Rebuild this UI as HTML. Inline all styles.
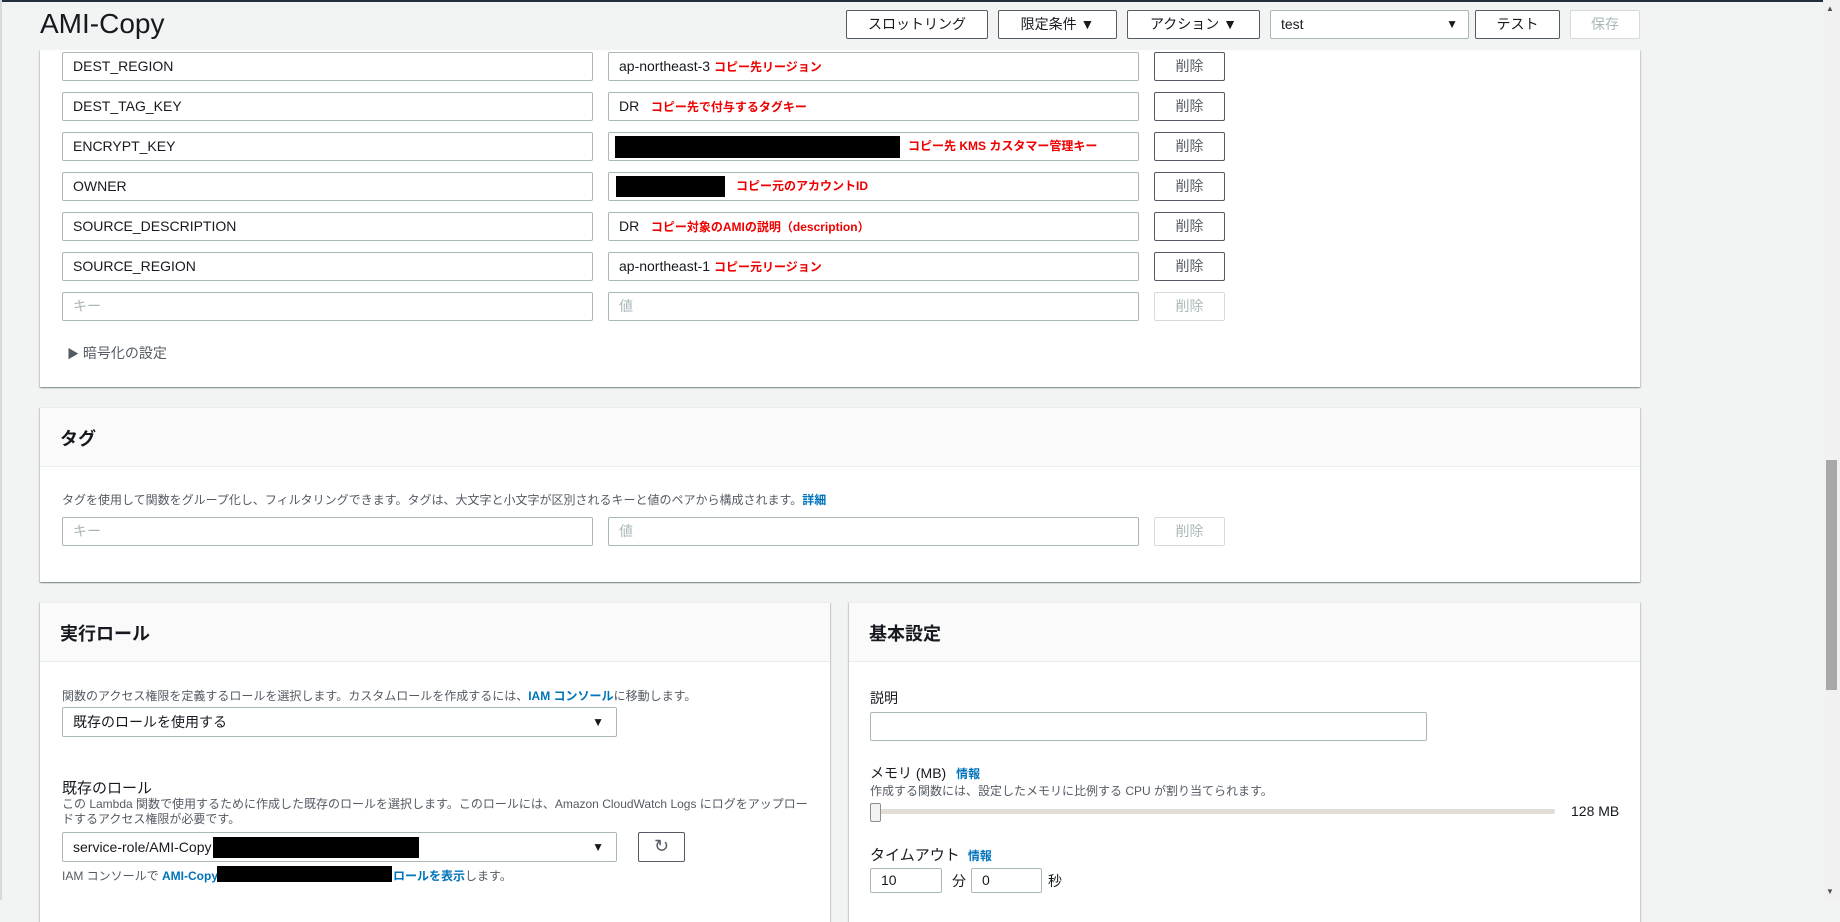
<!DOCTYPE html>
<html><head><meta charset="utf-8"><style>
*{box-sizing:border-box;margin:0;padding:0}
body{width:1840px;height:900px;overflow:hidden;background:#f2f3f3;font-family:"Liberation Sans","Noto Sans CJK JP",sans-serif;font-size:14px;color:#16191f;position:relative}
.a{position:absolute}
.panel{position:absolute;background:#fff;box-shadow:0 1px 1px 0 rgba(0,28,36,.3),1px 1px 1px 0 rgba(0,28,36,.15),-1px 1px 1px 0 rgba(0,28,36,.15);border-top:1px solid #eaeded}
.hdr{position:absolute;left:0;right:0;top:0;background:#fafafa;border-bottom:1px solid #eaeded}
.hdr span{position:absolute;left:20px;font-weight:bold;font-size:18px}
.inp{position:absolute;height:29px;border:1px solid #aab7b8;border-radius:2px;background:#fff;padding-left:10px;line-height:27px;font-size:14px;white-space:nowrap;overflow:hidden}
.ph{color:#aab7b8}
.btn{position:absolute;height:29px;border:1px solid #545b64;border-radius:2px;background:#fff;text-align:center;line-height:27px;font-size:14px;color:#545b64}
.dis{border-color:#d5dbdb;color:#aab7b8}
.red{color:#e00;font-size:12px;font-weight:bold}
.blk{position:absolute;background:#000}
.tri{font-size:12px}
.small{font-size:12px;color:#545b64}
.link{color:#0073bb;font-weight:bold}
</style></head><body>
<div class="a" style="left:0;top:0;width:1840px;height:2px;background:#232f3e"></div>
<div class="a" style="left:0;top:0;width:2px;height:900px;background:#d5dbdb"></div>
<div class="a" style="left:40px;top:8px;font-size:28px;">AMI-Copy</div>
<div class="btn" style="left:846px;top:10px;width:142px;height:29px;color:#16191f">スロットリング</div>
<div class="btn" style="left:998px;top:10px;width:119px;color:#16191f">限定条件 ▼</div>
<div class="btn" style="left:1127px;top:10px;width:133px;color:#16191f">アクション ▼</div>
<div class="inp" style="left:1270px;top:10px;width:199px;">test<span class="a" style="right:10px;top:0;font-size:12px">▼</span></div>
<div class="btn" style="left:1475px;top:10px;width:85px;color:#16191f">テスト</div>
<div class="btn dis" style="left:1570px;top:10px;width:70px">保存</div>

<div class="panel" style="left:40px;top:50px;width:1600px;height:337px;border-top:none">
</div>
<div class="inp" style="left:62px;top:52px;width:531px">DEST_REGION</div>
<div class="inp" style="left:608px;top:52px;width:531px">ap-northeast-3 <span class="red">コピー先リージョン</span></div>
<div class="btn" style="left:1154px;top:52px;width:71px">削除</div>
<div class="inp" style="left:62px;top:92px;width:531px">DEST_TAG_KEY</div>
<div class="inp" style="left:608px;top:92px;width:531px">DR&nbsp;&nbsp;&nbsp;<span class="red">コピー先で付与するタグキー</span></div>
<div class="btn" style="left:1154px;top:92px;width:71px">削除</div>
<div class="inp" style="left:62px;top:132px;width:531px">ENCRYPT_KEY</div>
<div class="inp" style="left:608px;top:132px;width:531px"><span class="red" style="position:absolute;left:299px">コピー先 KMS カスタマー管理キー</span></div>
<div class="blk" style="left:615px;top:136px;width:285px;height:22px"></div>
<div class="btn" style="left:1154px;top:132px;width:71px">削除</div>
<div class="inp" style="left:62px;top:172px;width:531px">OWNER</div>
<div class="inp" style="left:608px;top:172px;width:531px"><span class="red" style="position:absolute;left:127px">コピー元のアカウントID</span></div>
<div class="blk" style="left:616px;top:176px;width:109px;height:21px"></div>
<div class="btn" style="left:1154px;top:172px;width:71px">削除</div>
<div class="inp" style="left:62px;top:212px;width:531px">SOURCE_DESCRIPTION</div>
<div class="inp" style="left:608px;top:212px;width:531px">DR&nbsp;&nbsp;&nbsp;<span class="red">コピー対象のAMIの説明（description）</span></div>
<div class="btn" style="left:1154px;top:212px;width:71px">削除</div>
<div class="inp" style="left:62px;top:252px;width:531px">SOURCE_REGION</div>
<div class="inp" style="left:608px;top:252px;width:531px">ap-northeast-1 <span class="red">コピー元リージョン</span></div>
<div class="btn" style="left:1154px;top:252px;width:71px">削除</div>
<div class="inp ph" style="left:62px;top:292px;width:531px">キー</div>
<div class="inp ph" style="left:608px;top:292px;width:531px">値</div>
<div class="btn dis" style="left:1154px;top:292px;width:71px">削除</div>
<div class="a" style="left:67px;top:343px;color:#545b64"><span class="tri">▶</span> 暗号化の設定</div>

<div class="panel" style="left:40px;top:407px;width:1600px;height:175px">
<div class="hdr" style="height:59px"><span style="top:17px">タグ</span></div>
</div>
<div class="a small" style="left:62px;top:491px">タグを使用して関数をグループ化し、フィルタリングできます。タグは、大文字と小文字が区別されるキーと値のペアから構成されます。<span class="link">詳細</span></div>
<div class="inp ph" style="left:62px;top:517px;width:531px">キー</div>
<div class="inp ph" style="left:608px;top:517px;width:531px">値</div>
<div class="btn dis" style="left:1154px;top:517px;width:71px">削除</div>

<div class="panel" style="left:40px;top:602px;width:790px;height:320px">
<div class="hdr" style="height:59px"><span style="top:17px">実行ロール</span></div>
</div>
<div class="a small" style="left:62px;top:687px">関数のアクセス権限を定義するロールを選択します。カスタムロールを作成するには、<span class="link">IAM コンソール</span>に移動します。</div>
<div class="inp" style="left:62px;top:707px;width:555px;height:30px;line-height:28px">既存のロールを使用する<span class="a tri" style="right:12px;top:0">▼</span></div>
<div class="a" style="left:62px;top:777px;font-size:15px">既存のロール</div>
<div class="a small" style="left:62px;top:797px;width:752px;line-height:15px">この Lambda 関数で使用するために作成した既存のロールを選択します。このロールには、Amazon CloudWatch Logs にログをアップロードするアクセス権限が必要です。</div>
<div class="inp" style="left:62px;top:832px;width:555px;height:30px;line-height:28px">service-role/AMI-Copy<span class="a tri" style="right:12px;top:0">▼</span></div>
<div class="blk" style="left:213px;top:837px;width:206px;height:21px"></div>
<div class="btn" style="left:638px;top:832px;width:47px;height:30px;font-size:18px;color:#545b64">↻</div>
<div class="a small" style="left:62px;top:867px">IAM コンソールで <span class="link">AMI-Copy</span><span style="display:inline-block;width:175px"></span><span class="link">ロールを表示</span>します。</div>
<div class="blk" style="left:217px;top:866px;width:175px;height:16px"></div>

<div class="panel" style="left:849px;top:602px;width:791px;height:320px">
<div class="hdr" style="height:59px"><span style="top:17px">基本設定</span></div>
</div>
<div class="a" style="left:870px;top:688px">説明</div>
<div class="inp" style="left:870px;top:712px;width:557px"></div>
<div class="a" style="left:870px;top:763px">メモリ (MB) <span class="link" style="font-size:12px;margin-left:6px">情報</span></div>
<div class="a small" style="left:870px;top:782px">作成する関数には、設定したメモリに比例する CPU が割り当てられます。</div>
<div class="a" style="left:870px;top:809px;width:685px;height:5px;background:#e1ddd6;border-radius:2px"></div>
<div class="a" style="left:870px;top:803px;width:11px;height:19px;background:#f2f3f3;border:1px solid #8f8f8f;border-radius:2px"></div>
<div class="a" style="left:1571px;top:803px">128 MB</div>
<div class="a" style="left:870px;top:844px;font-size:15px">タイムアウト <span class="link" style="font-size:12px;margin-left:4px">情報</span></div>
<div class="inp" style="left:870px;top:868px;width:72px;height:25px;line-height:23px">10</div>
<div class="a" style="left:952px;top:871px">分</div>
<div class="inp" style="left:971px;top:868px;width:71px;height:25px;line-height:23px">0</div>
<div class="a" style="left:1048px;top:871px">秒</div>

<div class="a" style="left:1823px;top:0;width:17px;height:900px;background:#f1f1f1"></div>
<div class="a" style="left:1826px;top:460px;width:11px;height:230px;background:#a8a8a8"></div>
<div class="a" style="left:1826px;top:4px;font-size:8px;color:#505050">▲</div>
<div class="a" style="left:1826px;top:887px;font-size:8px;color:#505050">▼</div>
</body></html>
